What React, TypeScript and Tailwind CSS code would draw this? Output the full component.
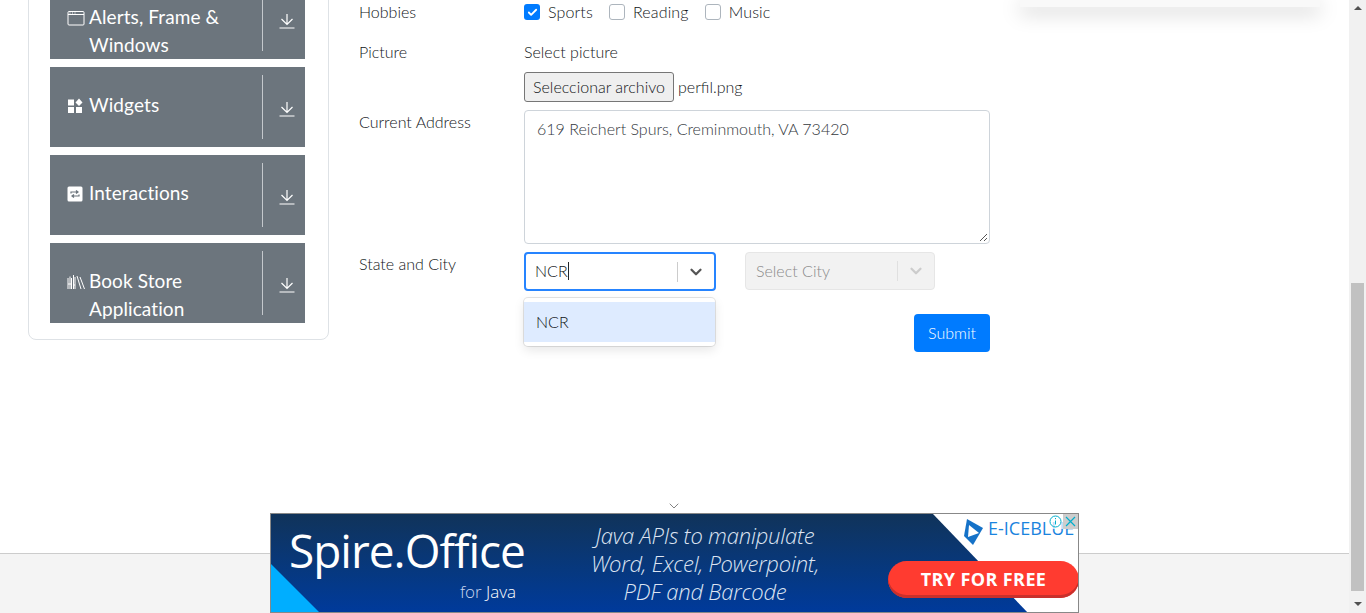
import { ChevronDown, Check } from 'lucide-react';

const font = "font-['Lato',sans-serif]";

function DownloadIcon() {
    return (
        <svg width="16" height="16" viewBox="0 0 16 16" fill="none" stroke="white" strokeWidth="1.2">
            <path d="M8 1v10M2.500 6 8 11.500 13.500 6M0.500 15h15" />
        </svg>
    );
}

function WindowIcon() {
    return (
        <svg width="18" height="16" viewBox="0 0 18 16" fill="none" stroke="white" strokeWidth="1">
            <rect x="1" y="1.500" width="16" height="13.500" rx="1" />
            <path d="M1 4.500h16" />
            <path d="M2.500 3h1M5 3h1M7.500 3h1" />
        </svg>
    );
}

function WidgetIcon() {
    return (
        <svg width="16" height="16" viewBox="0 0 16 16" fill="white">
            <rect x="1" y="1.500" width="6" height="6" />
            <rect x="1" y="9" width="6" height="6" />
            <rect x="9" y="9" width="6" height="6" />
            <path d="M12 0.500 15.500 4.500 12 8 8.500 4.500z" />
        </svg>
    );
}

function InteractionIcon() {
    return (
        <svg width="16" height="16" viewBox="0 0 16 16" fill="none">
            <rect x="0.500" y="0.500" width="15" height="15" rx="1.500" fill="white" />
            <path d="M4 7.500V6h6.500M9 4.500 11 6 9 7.500M12 8.500V10H5.500M7 8.500 5 10l2 1.500" stroke="#6c757d" strokeWidth="1.200" />
        </svg>
    );
}

function BookIcon() {
    return (
        <svg width="18" height="16" viewBox="0 0 18 16" fill="none" stroke="white" strokeWidth="1">
            <path d="M1 4v11M3 2.500V15M4.500 4v11M6.500 1v14M8 3v12M10 2l4 13M13 3l4.500 12" />
            <path d="M1 10h3.500M6.500 11H8" />
        </svg>
    );
}

const items = [
    { icon: <WindowIcon />, label: 'Alerts, Frame & Windows' },
    { icon: <WidgetIcon />, label: 'Widgets' },
    { icon: <InteractionIcon />, label: 'Interactions' },
    { icon: <BookIcon />, label: 'Book Store Application' },
];

function SidebarItem({ icon, label }: { icon: React.ReactNode; label: string }) {
    return (
        <div className="flex h-20 overflow-hidden bg-[#6c757d]">
            <div className="flex w-[212px] items-start pl-[17px] pr-4 pt-6 text-[19px] font-normal leading-7 tracking-[0.1px] text-white">
                <span className="flex h-7 w-[22px] shrink-0 items-center pt-[1px]">{icon}</span>
                <div className="min-w-0">{label}</div>
            </div>
            <div className="my-2 w-px bg-[#c4c8cc]" />
            <div className="pl-4 pt-[34px]">
                <DownloadIcon />
            </div>
        </div>
    );
}

function Hobby({ label, checked }: { label: string; checked?: boolean }) {
    return (
        <label className="flex items-center gap-2 tracking-[0.15px]">
            <span className={checked
                ? 'flex h-4 w-4 items-center justify-center rounded-[3px] bg-[#007bff]'
                : 'h-4 w-4 rounded-[3px] border border-[#adb5bd] bg-white'}>
                {checked && <Check size={11} color="white" strokeWidth={4} />}
            </span>
            {label}
        </label>
    );
}

function Banner() {
    return (
        <div className="absolute left-[270px] top-[513px] h-[100px] w-[809px] overflow-hidden border border-[#888] bg-gradient-to-b from-[#10335a] to-[#003a9b]">
            <svg className="absolute inset-0" width="809" height="100" viewBox="0 0 809 100">
                <path d="M0 50 50 100H0z" fill="#00aeff" />
                <path d="M662 0H809V100H758z" fill="white" />
                <path d="M693 22 696 5 712 14 702 31z" fill="#1572c8" />
                <path d="M698 11 708 19 697 23z" fill="white" />
            </svg>
            <span className="absolute left-[18px] top-[6px] font-['Open_Sans',sans-serif] text-[46px] font-medium leading-[60px] tracking-[-1px] text-white">Spire.Office</span>
            <span className="absolute left-[189px] top-[66px] font-['Open_Sans',sans-serif] text-[17px] leading-6 text-[#c9d6ee]">for <span className="text-white">Java</span></span>
            <div className="absolute left-[299px] top-[7px] w-[270px] text-center font-['Open_Sans',sans-serif] text-[22px] font-light italic leading-[28px] tracking-[-0.2px] text-[#dde4f2]">
                <p>Java APIs to manipulate</p>
                <p>Word, Excel, Powerpoint,</p>
                <p>PDF and Barcode</p>
            </div>
            <span className="absolute left-[717px] top-[1px] font-['Open_Sans',sans-serif] text-[18px] font-medium leading-[26px] text-[#1a84de]">E-ICEBLUE</span>
            <div className="absolute left-[617px] top-[47px] flex h-[37px] w-[191px] items-center justify-center rounded-full bg-[#ff3b30] font-['Open_Sans',sans-serif] text-[18px] font-bold tracking-[0.4px] text-white shadow-[inset_0_-3px_0_#c9302c]">
                TRY FOR FREE
            </div>
            <div className="absolute right-0 top-0 flex h-[15px] items-center">
                <span className="flex h-[15px] w-[15px] items-center justify-center bg-white/70">
                    <svg width="13" height="13" viewBox="0 0 13 13" fill="none" stroke="#00aecd" strokeWidth="1">
                        <circle cx="6.500" cy="6.500" r="5.500" />
                        <path d="M6.500 5.500v4M6.500 3v1.200" />
                    </svg>
                </span>
                <span className="flex h-[15px] w-[15px] items-center justify-center bg-[#cdcdcd]">
                    <svg width="11" height="11" viewBox="0 0 11 11" fill="none" stroke="#00aecd" strokeWidth="1.200">
                        <path d="M1 1l9 9M10 1l-9 9" />
                    </svg>
                </span>
            </div>
        </div>
    );
}

export default function App() {
    return (
        <div className={`relative flex h-[613px] w-[1366px] overflow-hidden bg-white text-[16px] font-light text-[#111518] ${font}`}>
            <div className="flex w-[1349px] flex-col">
                <div className="flex h-[553px] items-start overflow-hidden">
                    {/* Sidebar, scrolled past its top */}
                    <aside className="ml-7 mt-[-30px] w-[301px] rounded-b-[8px] border border-[#dee2e6] pb-4 pl-[21px] pr-[23px]">
                        <div className="flex flex-col gap-2 pt-2">
                            {items.map((item) => (
                                <SidebarItem key={item.label} icon={item.icon} label={item.label} />
                            ))}
                        </div>
                    </aside>

                    {/* Form */}
                    <form className="ml-[30px] w-[631px]">
                        <div className="flex h-6 items-center">
                            <div className="w-[165px]">Hobbies</div>
                            <div className="flex gap-4">
                                <Hobby label="Sports" checked />
                                <Hobby label="Reading" />
                                <Hobby label="Music" />
                            </div>
                        </div>

                        <div className="mt-4 flex">
                            <div className="w-[165px] leading-6">Picture</div>
                            <div>
                                <div className="leading-6">Select picture</div>
                                <div className="mt-2 flex h-[30px] items-center gap-1">
                                    <span className="flex h-[30px] w-[150px] items-center justify-center rounded-[3px] border border-[#767676] bg-[#efefef]">Seleccionar archivo</span>
                                    <span>perfil.png</span>
                                </div>
                            </div>
                        </div>

                        <div className="mt-2 flex">
                            <div className="w-[165px] leading-6">Current Address</div>
                            <div className="relative h-[134px] w-[466px] rounded-[4px] border border-[#ced4da] px-3 py-[6px] text-[#33383d]">
                                619 Reichert Spurs, Creminmouth, VA 73420
                                <svg className="absolute bottom-[1px] right-[1px]" width="9" height="9" viewBox="0 0 9 9" stroke="#555" strokeWidth="1">
                                    <path d="M1 8 8 1M5 8l3-3" />
                                </svg>
                            </div>
                        </div>

                        <div className="mt-2 flex">
                            <div className="w-[165px] leading-6">State and City</div>
                            <div className="relative flex h-[39px] w-[192px] items-center rounded-[4px] border-2 border-[#2684ff] pl-[9px]">
                                <span className="mb-[2px]">NCR</span>
                                <span className="mb-[2px] h-[18px] w-px bg-[#212529]" />
                                <span className="ml-auto h-5 w-px bg-[#ccc]" />
                                <span className="flex w-[36px] justify-center">
                                    <ChevronDown size={18} color="#555" strokeWidth={3} />
                                </span>
                                {/* Open menu */}
                                <div className="absolute left-[-2px] top-[44px] z-10 w-[191px] rounded-[4px] bg-white py-1 shadow-[0_0_0_1px_rgba(0,0,0,0.1),0_4px_11px_rgba(0,0,0,0.1)]">
                                    <div className="flex h-10 items-center bg-[#deebff] pl-3">NCR</div>
                                </div>
                            </div>
                            <div className="ml-[29px] flex h-[38px] w-[190px] items-center rounded-[4px] border border-[#e6e6e6] bg-[#f2f2f2] pl-[10px] text-[#8a8a8a]">
                                Select City
                                <span className="ml-auto h-5 w-px bg-[#e0e0e0]" />
                                <span className="flex w-[36px] justify-center">
                                    <ChevronDown size={18} color="#ccc" strokeWidth={3} />
                                </span>
                            </div>
                        </div>

                        <div className="mt-[23px] flex justify-end">
                            <button type="button" className="h-[38px] w-[76px] rounded-[4px] bg-[#007bff] text-white">Submit</button>
                        </div>
                    </form>

                    {/* Right ad, bottom edge only */}
                    <div className="ml-[30px] h-[7px] w-[300px] bg-[#f9f9f9] shadow-[0_5px_20px_rgba(0,0,0,0.25)]" />
                </div>

                <footer className="h-[60px] border-t border-[#ccc] bg-[#f4f4f4]" />
            </div>

            {/* Scrollbar */}
            <div className="flex w-[17px] flex-col items-center bg-[#f1f1f1]">
                <div className="mt-[6px] h-0 w-0 border-x-[4px] border-b-[4px] border-x-transparent border-b-[#505050]" />
                <div className="mt-[273px] h-[308px] w-[13px] bg-[#c1c1c1]" />
                <div className="mt-[11px] h-0 w-0 border-x-[4px] border-t-[4px] border-x-transparent border-t-[#505050]" />
            </div>

            {/* Bottom banner */}
            <ChevronDown className="absolute left-[666px] top-[498px]" size={16} color="#444" strokeWidth={1} />
            <Banner />
        </div>
    );
}
